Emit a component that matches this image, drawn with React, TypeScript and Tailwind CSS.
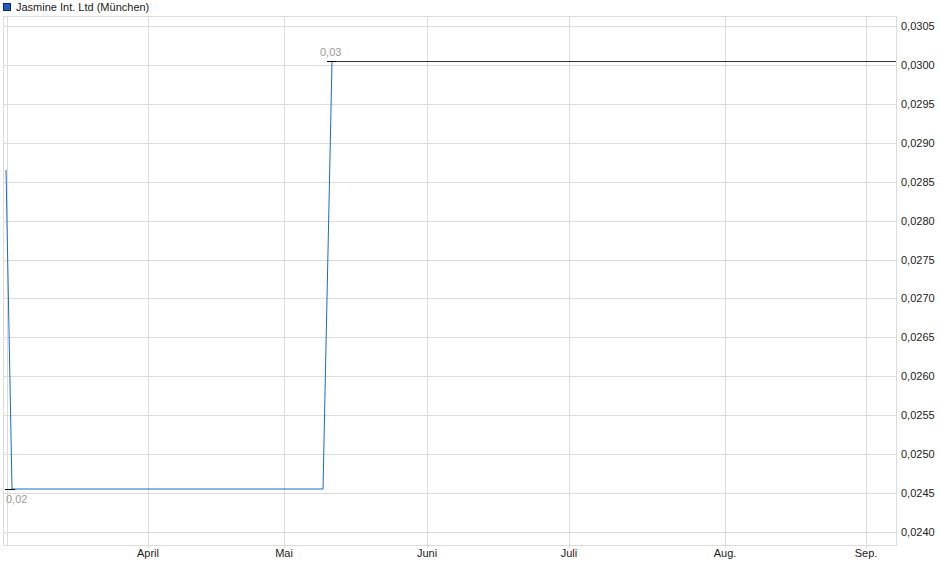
const yTicks = ['0,0305', '0,0300', '0,0295', '0,0290', '0,0285', '0,0280', '0,0275', '0,0270', '0,0265', '0,0260', '0,0255', '0,0250', '0,0245', '0,0240'];
const xTicks = [
  { x: 148, label: 'April' },
  { x: 284, label: 'Mai' },
  { x: 427, label: 'Juni' },
  { x: 569, label: 'Juli' },
  { x: 725, label: 'Aug.' },
  { x: 866, label: 'Sep.' },
];
const yOf = (i: number) => 26 + i * 38.92;

export default function App() {
  return (
    <div className="relative w-[940px] h-[579px] bg-white" style={{ fontFamily: '"Liberation Sans", Arial, sans-serif' }}>
      <div className="flex items-center gap-[5px] pl-[3px] h-[14px] text-[11px] text-[#222]">
        <span className="inline-block w-[8px] h-[8px] bg-[#1f5bc4] border border-[#0a2a66]" />
        <span>Jasmine Int. Ltd (München)</span>
      </div>
      <svg width="940" height="565" viewBox="0 14 940 565" className="block" style={{ fontFamily: '"Liberation Sans", Arial, sans-serif' }}>
        <rect x="3.5" y="16.5" width="893" height="529" fill="none" stroke="#dcdcdc" />
        <line x1="7.5" y1="16" x2="7.5" y2="545" stroke="#dcdcdc" />
        {yTicks.map((t, i) => (
          <g key={t}>
            <line x1="3" x2="896" y1={Math.round(yOf(i)) + 0.5} y2={Math.round(yOf(i)) + 0.5} stroke="#dcdcdc" />
            <text x="901" y={Math.round(yOf(i)) + 4} fontSize="11" fill="#222">{t}</text>
          </g>
        ))}
        {xTicks.map((t) => (
          <g key={t.label}>
            <line x1={t.x + 0.5} x2={t.x + 0.5} y1="16" y2="548" stroke="#dcdcdc" />
            <text x={t.x} y="557" fontSize="11" fill="#222" textAnchor="middle">{t.label}</text>
          </g>
        ))}
        <polyline points="6,170 12,489 323,489 332,61" fill="none" stroke="#1f66d1" strokeWidth="1" />
        <line x1="332" y1="61.5" x2="896" y2="61.5" stroke="#333" />
        <line x1="5" y1="489.5" x2="15" y2="489.5" stroke="#000" />
        <line x1="327" y1="61.5" x2="336" y2="61.5" stroke="#000" />
        <text x="6" y="503" fontSize="11" fill="#999">0,02</text>
        <text x="320" y="56" fontSize="11" fill="#999">0,03</text>
      </svg>
    </div>
  );
}
